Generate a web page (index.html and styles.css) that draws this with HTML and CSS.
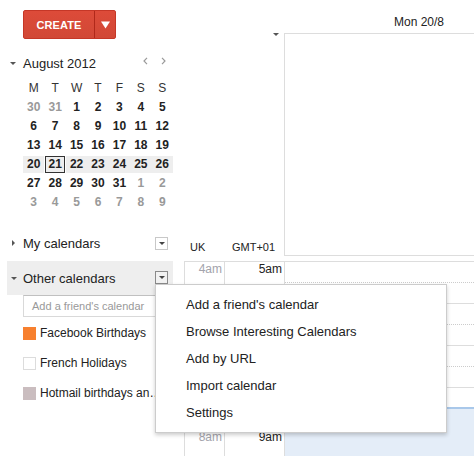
FILE: index.html
```html
<!DOCTYPE html>
<html>
<head>
<meta charset="utf-8">
<link rel="stylesheet" href="styles.css">
</head>
<body>
<div class="app">
  <aside class="sidebar">
    <div class="create-wrap">
      <div class="create">
        <span class="create-main">CREATE</span>
        <span class="create-arrow"><svg width="9" height="8" viewBox="0 0 9 8"><path d="M0 0.5H9L4.5 7.5Z" fill="#fff"/></svg></span>
      </div>
    </div>

    <div class="mc-head">
      <span class="tri-down"></span>
      <span class="mc-title">August 2012</span>
      <span class="mc-nav">
        <svg width="5" height="8" viewBox="0 0 5 8"><path d="M4 0.8L1 4L4 7.2" fill="none" stroke="#9a9a9a" stroke-width="1.2"/></svg>
        <svg width="5" height="8" viewBox="0 0 5 8"><path d="M1 0.8L4 4L1 7.2" fill="none" stroke="#9a9a9a" stroke-width="1.2"/></svg>
      </span>
    </div>

    <div class="mc-grid">
      <span class="dh">M</span><span class="dh">T</span><span class="dh">W</span><span class="dh">T</span><span class="dh">F</span><span class="dh">S</span><span class="dh">S</span>
      <span class="d off">30</span><span class="d off">31</span><span class="d">1</span><span class="d">2</span><span class="d">3</span><span class="d">4</span><span class="d">5</span>
      <span class="d">6</span><span class="d">7</span><span class="d">8</span><span class="d">9</span><span class="d">10</span><span class="d">11</span><span class="d">12</span>
      <span class="d">13</span><span class="d">14</span><span class="d">15</span><span class="d">16</span><span class="d">17</span><span class="d">18</span><span class="d">19</span>
      <span class="d wk">20</span><span class="d wk today">21</span><span class="d wk">22</span><span class="d wk">23</span><span class="d wk">24</span><span class="d wk">25</span><span class="d wk">26</span>
      <span class="d">27</span><span class="d">28</span><span class="d">29</span><span class="d">30</span><span class="d">31</span><span class="d off">1</span><span class="d off">2</span>
      <span class="d off">3</span><span class="d off">4</span><span class="d off">5</span><span class="d off">6</span><span class="d off">7</span><span class="d off">8</span><span class="d off">9</span>
    </div>

    <div class="sec sec-my">
      <span class="tri-right"></span>
      <span class="sec-title">My calendars</span>
      <span class="ddbox"><span class="tri-small"></span></span>
    </div>

    <div class="sec sec-other">
      <span class="tri-down tri-sec"></span>
      <span class="sec-title">Other calendars</span>
      <span class="ddbox active"><span class="tri-small"></span></span>
    </div>

    <div class="friend-input">Add a friend's calendar</div>

    <ul class="cal-list">
      <li class="cal"><span class="swatch fb"></span><span class="cal-name">Facebook Birthdays</span></li>
      <li class="cal"><span class="swatch fr"></span><span class="cal-name">French Holidays</span></li>
      <li class="cal"><span class="swatch hm"></span><span class="cal-name trunc">Hotmail birthdays and anniversaries</span></li>
    </ul>
  </aside>

  <main class="main">
    <div class="dayhead">Mon 20/8</div>
    <div class="allday">
      <div class="gutter">
        <span class="gutter-tri"></span>
        <div class="tz-labels">
          <span class="tz tz-uk">UK</span>
          <span class="tz tz-gmt">GMT+01</span>
        </div>
      </div>
      <div class="allday-box"></div>
    </div>
    <div class="grid">
      <div class="col tz1">
        <div class="hr sec-time">4am</div>
        <div class="hr"></div>
        <div class="hr"></div>
        <div class="hr"></div>
        <div class="hr sec-time">8am</div>
      </div>
      <div class="col tz2">
        <div class="hr">5am</div>
        <div class="hr"></div>
        <div class="hr"></div>
        <div class="hr"></div>
        <div class="hr">9am</div>
      </div>
      <div class="col days">
        <div class="hour"><div class="half1"></div><div class="half2"></div></div>
        <div class="hour"><div class="half1"></div><div class="half2"></div></div>
        <div class="hour"><div class="half1"></div><div class="half2"></div></div>
        <div class="hour"><div class="half1"></div><div class="half2"></div></div>
        <div class="hour"><div class="half1"></div><div class="half2"></div></div>
        <div class="selection"></div>
      </div>
    </div>
  </main>

  <div class="menu">
    <div class="menu-item">Add a friend's calendar</div>
    <div class="menu-item">Browse Interesting Calendars</div>
    <div class="menu-item">Add by URL</div>
    <div class="menu-item">Import calendar</div>
    <div class="menu-item">Settings</div>
  </div>
</div>
</body>
</html>
```

FILE: styles.css
```css
html, body {
  margin: 0;
  padding: 0;
  height: 456px;
  overflow: hidden;
  background: #fff;
}
body {
  font-family: "Liberation Sans", Arial, sans-serif;
  color: #222;
}
.app {
  position: relative;
  display: flex;
  width: 474px;
  height: 456px;
  overflow: hidden;
}

/* Sidebar */
.sidebar {
  width: 184px;
  flex: none;
}
.create-wrap {
  padding: 10px 0 0 23px;
}
.create {
  display: inline-flex;
  height: 29px;
  box-sizing: border-box;
  border: 1px solid #c53727;
  border-radius: 2px;
  background: linear-gradient(#dd4b39, #d14836);
  color: #fff;
}
.create-main {
  width: 70px;
  display: flex;
  align-items: center;
  justify-content: center;
  font-weight: bold;
  font-size: 11px;
  letter-spacing: 0.1px;
}
.create-arrow {
  width: 20px;
  display: flex;
  align-items: center;
  justify-content: center;
  border-left: 1px solid #b0281a;
}

.mc-head {
  display: flex;
  align-items: center;
  height: 16px;
  margin-top: 16px;
  width: 173px;
}
.tri-down {
  width: 0;
  height: 0;
  border-left: 3px solid transparent;
  border-right: 3px solid transparent;
  border-top: 3px solid #555;
  margin-left: 10px;
  margin-right: 7px;
}
.mc-title {
  font-size: 13px;
}
.mc-nav {
  margin-left: auto;
  margin-right: 7px;
  display: flex;
  gap: 13px;
  margin-top: -4px;
}

.mc-grid {
  margin: 9px 0 0 23px;
  width: 150px;
  display: grid;
  grid-template-columns: repeat(7, 1fr);
  row-gap: 2px;
}
.mc-grid span {
  height: 17px;
  line-height: 17px;
  text-align: center;
  font-size: 12px;
  box-sizing: border-box;
}
.dh {
  color: #333;
}
.d {
  font-weight: bold;
  color: #222;
}
.d.off {
  color: #999;
}
.d.wk {
  background: #eee;
}
.d.today {
  border: 1px solid #333;
  line-height: 15px;
  margin: 0 0.5px;
}

.sec {
  display: flex;
  align-items: center;
  margin-left: 7px;
  width: 166px;
  box-sizing: border-box;
}
.sec-my {
  height: 24px;
  margin-top: 20px;
}
.sec-other {
  height: 34px;
  margin-top: 6px;
  background: #eee;
}
.sec-title {
  font-size: 13px;
}
.tri-right {
  width: 0;
  height: 0;
  border-top: 3px solid transparent;
  border-bottom: 3px solid transparent;
  border-left: 3px solid #555;
  margin-left: 5px;
  margin-right: 8px;
}
.tri-sec {
  margin-left: 4px;
  margin-right: 6px;
}
.ddbox {
  margin-left: auto;
  margin-right: 5px;
  width: 13px;
  height: 13px;
  box-sizing: border-box;
  border: 1px solid #c8c8c8;
  background: #fff;
  display: flex;
  align-items: center;
  justify-content: center;
}
.ddbox.active {
  border-color: #8a8a8a;
  background: #f2f2f2;
  margin-top: -2px;
}
.tri-small {
  width: 0;
  height: 0;
  border-left: 3px solid transparent;
  border-right: 3px solid transparent;
  border-top: 3px solid #444;
}

.friend-input {
  margin-left: 23px;
  width: 150px;
  height: 22px;
  box-sizing: border-box;
  border: 1px solid #d9d9d9;
  border-top-color: #c0c0c0;
  padding-left: 8px;
  font-size: 11px;
  line-height: 20px;
  color: #999;
  background: #fff;
}

.cal-list {
  list-style: none;
  margin: 1px 0 0 0;
  padding: 0;
}
.cal {
  display: flex;
  align-items: center;
  height: 30px;
  padding-left: 23px;
}
.swatch {
  width: 13px;
  height: 13px;
  box-sizing: border-box;
  margin-right: 4px;
  flex: none;
}
.swatch.fb { background: #f7802f; }
.swatch.fr { background: #fff; border: 1px solid #dcdcdc; }
.swatch.hm { background: #cabdbf; }
.cal-name {
  font-size: 12px;
  white-space: nowrap;
}
.cal-name.trunc {
  max-width: 125px;
  overflow: hidden;
  text-overflow: ellipsis;
}

/* Main */
.main {
  flex: 1;
  display: flex;
  flex-direction: column;
  min-height: 0;
  overflow: hidden;
}
.dayhead {
  flex: none;
  height: 33px;
  box-sizing: border-box;
  padding: 15px 0 0 210px;
  font-size: 12px;
  line-height: 14px;
  white-space: nowrap;
}
.allday {
  flex: none;
  display: flex;
  height: 223px;
}
.gutter {
  width: 100px;
  display: flex;
  flex-direction: column;
  align-items: flex-end;
}
.gutter-tri {
  width: 0;
  height: 0;
  border-left: 3.5px solid transparent;
  border-right: 3.5px solid transparent;
  border-top: 3px solid #555;
  margin-right: 5px;
  margin-top: 0;
}
.tz-labels {
  margin-top: auto;
  width: 100px;
  display: flex;
  font-size: 11px;
  line-height: 14px;
  margin-bottom: 2px;
}
.tz-uk {
  width: 40px;
  padding-left: 6px;
  box-sizing: border-box;
}
.tz-gmt {
  width: 60px;
  padding-left: 8px;
  box-sizing: border-box;
}
.allday-box {
  flex: 1;
  border: 1px solid #ddd;
  border-right: none;
}

.grid {
  flex: none;
  margin-top: 5px;
  display: flex;
  border-top: 1px solid #ddd;
  height: 220px;
}
.col {
  box-sizing: border-box;
  border-left: 1px solid #ddd;
}
.tz1 { width: 40px; flex: none; }
.tz2 { width: 60px; flex: none; }
.days {
  flex: 1;
  position: relative;
}
.hr {
  height: 42px;
  text-align: right;
  padding-right: 2px;
  font-size: 12px;
  line-height: 14px;
}
.sec-time {
  color: #a3a3ab;
}
.hour {
  height: 42px;
}
.half1 {
  height: 21px;
  box-sizing: border-box;
  border-bottom: 1px dotted #ccc;
}
.half2 {
  height: 21px;
  box-sizing: border-box;
  border-bottom: 1px solid #ddd;
}
.selection {
  position: absolute;
  left: 0;
  right: 0;
  top: 145px;
  height: 80px;
  background: #e4edf8;
  border-top: 2px solid #a9c8ea;
}

/* Dropdown menu */
.menu {
  position: absolute;
  left: 155px;
  top: 284px;
  width: 292px;
  box-sizing: border-box;
  padding: 6px 0;
  background: #fff;
  border: 1px solid rgba(0, 0, 0, 0.2);
  box-shadow: 0 2px 4px rgba(0, 0, 0, 0.2);
}
.menu-item {
  height: 27px;
  line-height: 27px;
  padding-left: 30px;
  font-size: 13px;
  color: #222;
  white-space: nowrap;
}
```
